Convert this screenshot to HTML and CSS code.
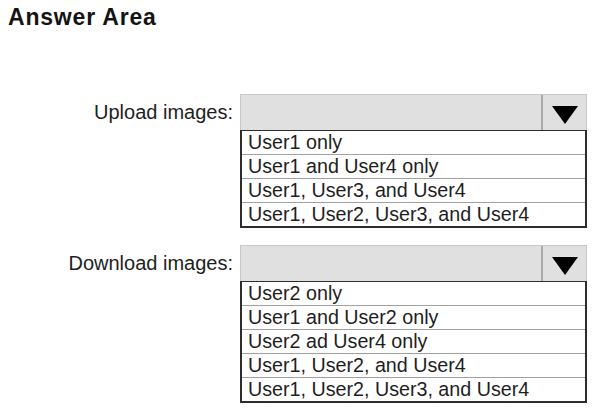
FILE: index.html
```html
<!DOCTYPE html>
<html lang="en">
<head>
<meta charset="utf-8">
<title>Answer Area</title>
<link rel="stylesheet" href="styles.css">
</head>

<body>

<h1 class="title">Answer Area</h1>

<div class="field field-upload">
	<div class="label">Upload images:</div>
	<div class="control">
		<div class="select">
			<span class="select-value"></span>
			<span class="select-arrow">
				<svg width="26" height="18" viewBox="0 0 26 18"><polygon points="0,0 26,0 13,18" fill="#000"/></svg>
			</span>
		</div>
		<ul class="options">
			<li>User1 only</li>
			<li>User1 and User4 only</li>
			<li>User1, User3, and User4</li>
			<li>User1, User2, User3, and User4</li>
		</ul>
	</div>
</div>

<div class="field field-download">
	<div class="label">Download images:</div>
	<div class="control">
		<div class="select">
			<span class="select-value"></span>
			<span class="select-arrow">
				<svg width="26" height="18" viewBox="0 0 26 18"><polygon points="0,0 26,0 13,18" fill="#000"/></svg>
			</span>
		</div>
		<ul class="options">
			<li>User2 only</li>
			<li>User1 and User2 only</li>
			<li>User2 ad User4 only</li>
			<li>User1, User2, and User4</li>
			<li>User1, User2, User3, and User4</li>
		</ul>
	</div>
</div>

</body>
</html>
```

FILE: styles.css
```css
html {
	font-family: 'Liberation Sans', Arial, sans-serif;
	color: rgb(30, 30, 30);
}

body {
	margin: 0;
	background: #fff;
}

.title {
	font-size: 23px;
	font-weight: bold;
	letter-spacing: 0.8px;
	line-height: 28px;
	margin: 0;
	padding: 3px 8px 0;
	color: rgb(20, 20, 20);
}

.field {
	display: flex;
	align-items: flex-start;
}

.field-upload {
	margin-top: 63px;
}

.field-download {
	margin-top: 17px;
}

.label {
	width: 240px;
	padding-right: 7px;
	box-sizing: border-box;
	text-align: right;
	font-size: 20px;
	line-height: 36px;
	height: 36px;
}

.control {
	width: 347px;
}

.select {
	display: flex;
	height: 36px;
	box-sizing: border-box;
	border: 1px solid rgb(200, 200, 200);
	border-bottom: 0;
	background: rgb(224, 224, 224);
}

.select-value {
	flex: 1;
}

.select-arrow {
	width: 45px;
	border-left: 2px solid rgb(170, 170, 170);
	display: flex;
	align-items: center;
	justify-content: center;
	padding-top: 5px;
	box-sizing: border-box;
}

.options {
	list-style: none;
	margin: 0;
	padding: 0;
	border: 2px solid rgb(45, 45, 45);
	border-top-width: 1px;
}

.options li {
	font-size: 19.7px;
	line-height: 23px;
	height: 23px;
	padding-left: 6px;
	white-space: nowrap;
}

.options li + li {
	border-top: 1px solid rgb(160, 160, 160);
}
```
